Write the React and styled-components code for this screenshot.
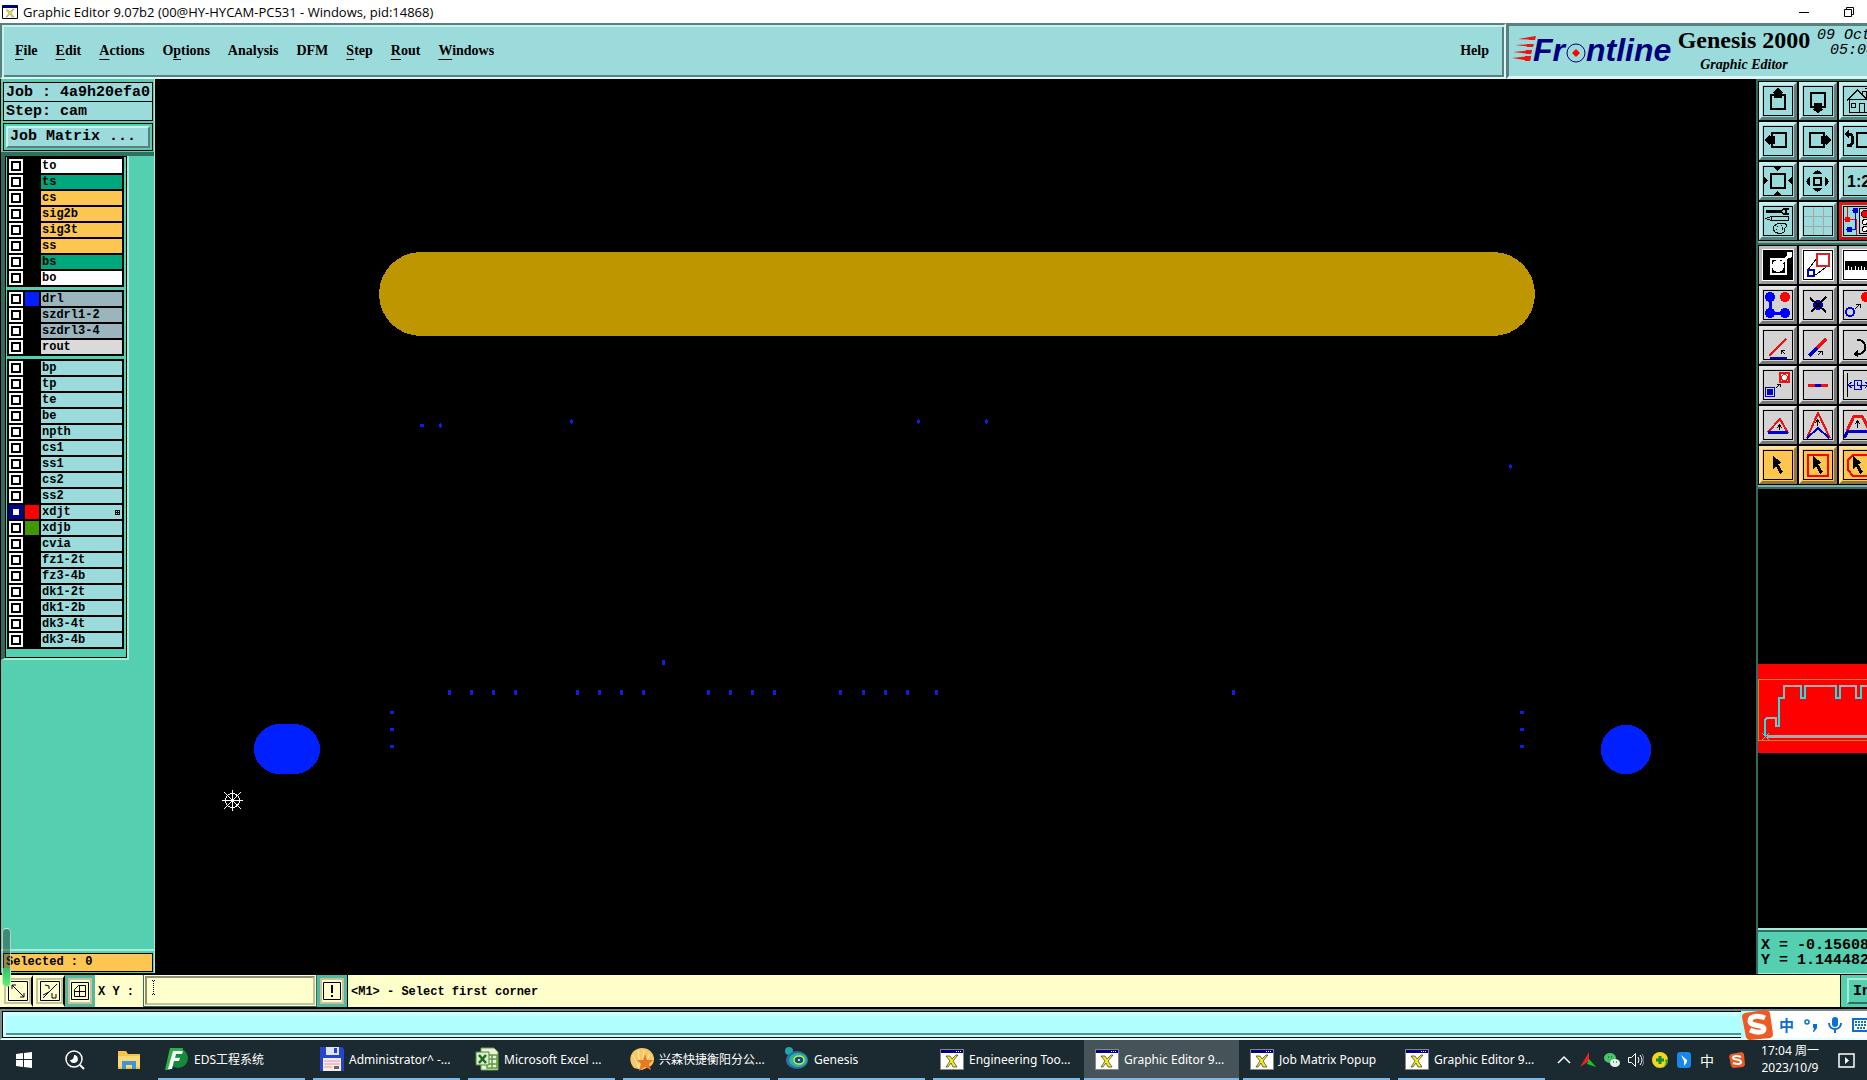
import React from 'react'
import styled, { createGlobalStyle } from 'styled-components'

const layerGroups = [
  [
    { name: 'to', bg: '#ffffff' },
    { name: 'ts', bg: '#00a67c' },
    { name: 'cs', bg: '#fdc650' },
    { name: 'sig2b', bg: '#fdc650' },
    { name: 'sig3t', bg: '#fdc650' },
    { name: 'ss', bg: '#fdc650' },
    { name: 'bs', bg: '#00a67c' },
    { name: 'bo', bg: '#ffffff' },
  ],
  [
    { name: 'drl', bg: '#9bb5be', swatch: '#0020ff' },
    { name: 'szdrl1-2', bg: '#9bb5be' },
    { name: 'szdrl3-4', bg: '#9bb5be' },
    { name: 'rout', bg: '#dadada' },
  ],
  [
    { name: 'bp' },
    { name: 'tp' },
    { name: 'te' },
    { name: 'be' },
    { name: 'npth' },
    { name: 'cs1' },
    { name: 'ss1' },
    { name: 'cs2' },
    { name: 'ss2' },
    { name: 'xdjt', swatch: '#ff0000', work: true },
    { name: 'xdjb', swatch: '#409800' },
    { name: 'cvia' },
    { name: 'fz1-2t' },
    { name: 'fz3-4b' },
    { name: 'dk1-2t' },
    { name: 'dk1-2b' },
    { name: 'dk3-4t' },
    { name: 'dk3-4b' },
  ],
]

// menu label and the index of its underlined letter
const menus = [
  ['File', 0],
  ['Edit', 0],
  ['Actions', 0],
  ['Options', 1],
  ['Analysis', -1],
  ['DFM', -1],
  ['Step', 0],
  ['Rout', 0],
  ['Windows', 0],
]

const tallPads = [449, 471, 493, 515, 577, 599, 621, 643, 708, 730, 752, 774, 840, 863, 885, 907, 936, 1233]
const widePads = [[391, 712], [391, 729], [391, 746], [1521, 712], [1521, 729], [1521, 746], [421, 425]]
const roundPads = [[440, 425], [571, 421], [918, 421], [986, 421], [1510, 466]]

const arrowCursor = <path d="M10 6l9 7-4 1 5 8-3 2-4-8-3 3z" fill="#000" />

const viewTools = [
  ['Pan up', <><path d="M8 9h14v14H8z" fill="none" stroke="#000" strokeWidth="2" /><path d="M15 2l6 5h-2v5h-8V7H9z" /></>],
  ['Pan down', <><path d="M8 7h14v14H8z" fill="none" stroke="#000" strokeWidth="2" /><path d="M15 27l6-4h-2v-6h-8v6H9z" /></>],
  ['Home', <g fill="none" stroke="#000"><path d="M4 14.500L14.500 4 25 14.500M6 13v13h18V13M6 13.500h18" /><path d="M8.500 17.500h4v4h-4zM16.500 26v-9h5v9M19 8V5h4v7M22 3l3-1M24 5l4-3" /></g>],
  ['Pan left', <><path d="M9 7h14v14H9z" fill="none" stroke="#000" strokeWidth="2" /><path d="M2 14l5-6v2h5v8H7v2z" /></>],
  ['Pan right', <><path d="M7 7h14v14H7z" fill="none" stroke="#000" strokeWidth="2" /><path d="M28 14l-5-6v2h-5v8h5v2z" /></>],
  ['Previous view', <><path d="M14 7h14v14H14z" fill="none" stroke="#000" strokeWidth="2" /><path d="M5 8h3q4 6 0 11H4" fill="none" stroke="#000" strokeWidth="3" /><path d="M1 8l5-5v9z" /></>],
  ['Zoom in', <><path d="M8 8h14v14H8z" fill="none" stroke="#000" strokeWidth="2" /><path d="M10 1h9l-4.500 4zM10 29h9l-4.500-4zM1 10v9l4-4.500zM29 10v9l-4-4.500z" /></>],
  ['Zoom out', <><path d="M11 12h7v7h-7z" fill="none" stroke="#000" strokeWidth="2" /><path d="M9 8h11l-5.500-4zM9 22h11l-5.500 4zM7 10v11l-4-5.500zM22 10v11l4-5.500z" /></>],
  ['Scale', <text x="4" y="21" fontFamily="Liberation Sans, sans-serif" fontWeight="700" fontSize="16">1:2</text>],
  ['Options', <><path d="M3 4h16v3H3z" /><path d="M26 3h-5l-3 2.500L21 8h5M26 3l-3 1v3l3 1" fill="none" stroke="#000" strokeWidth="1.500" /><path d="M3 12.500l5-2h17v4H8zM8 11v3" fill="none" stroke="#000" /><path d="M11 20l5-3h6l2 3-3 3v3l-4 2-5-2-2-3zM14 20h1M18 19h1M13 23h1M19 21v3" fill="none" stroke="#000" /></>],
  ['Grid', <path d="M10.500 1v28M20.500 1v28M1 10.500h28M1 20.500h28" stroke="#aaa6a8" />],
  ['Panel setup', <><path d="M4.500 1v12h9v16" fill="none" stroke="#f00" /><path d="M12.500 5v18h-6" fill="none" stroke="#00d" /><circle cx="4.500" cy="13.500" r="3" fill="#f00" /><circle cx="12.500" cy="4.500" r="3" fill="#00d" /><circle cx="6.500" cy="23.500" r="3" fill="#00d" /><path d="M16.500 2.500h13v25h-13z" fill="#d8d8d8" stroke="#000" /><circle cx="22" cy="8" r="3.500" fill="#f00" stroke="#000" /><circle cx="22" cy="16" r="2.500" fill="#fff" stroke="#000" /><circle cx="22" cy="23" r="2.500" fill="#fff" stroke="#000" /></>, 'red'],
]

const editTools = [
  ['Add feature', <><path d="M0 0h30v30H0z" /><path d="M7.500 8.500h15v15h-15z" fill="none" stroke="#fff" strokeWidth="2" /><circle cx="15" cy="16" r="6" fill="#fff" /><path d="M19 10l5-4V2h5v5l-5 2-4 4z" fill="#fff" /></>, 'white'],
  ['Copy feature', <><path d="M17 4L5 20M26 15L11 26" stroke="#000" /><path d="M14 4h12v12H14z" fill="#fff" stroke="#d22" strokeWidth="2" /><path d="M5 20h6v6H5z" fill="#fff" stroke="#00c" strokeWidth="2" /></>, 'white'],
  ['Measure', <path d="M2 11h28v9H28v-3h-1v3h-2v-4h-1v4h-2v-3h-1v3h-2v-4h-1v4h-2v-3h-1v3h-2v-4h-1v4H9v-3H8v3H6v-4H5v4H2z" />, 'white'],
  ['Connections', <><path d="M7 8v15h15" fill="none" stroke="#00f" strokeWidth="3" /><g fill="#00f"><circle cx="7" cy="7" r="5" /><circle cx="7" cy="23" r="5" /><circle cx="22" cy="23" r="5" /></g><circle cx="22" cy="7" r="5" fill="#f00" /></>],
  ['Delete', <><circle cx="15" cy="15" r="5" fill="#00c" /><path d="M7 8l16 14M23 7L8 22" stroke="#000" strokeWidth="2" /></>],
  ['Move', <><circle cx="7" cy="22" r="4" fill="none" stroke="#00f" strokeWidth="2" /><circle cx="23" cy="7" r="5" fill="#f00" /><path d="M12 19l5-5M13 14h4v4" fill="none" stroke="#000" /></>],
  ['Rotate line', <><path d="M6 26L23 9" stroke="#e11" strokeWidth="2" /><path d="M7 28h17" stroke="#00c" strokeWidth="3" /><path d="M22 24l-4-4M18 24v-4h4" fill="none" stroke="#000" /></>],
  ['Stretch line', <><path d="M6 26l8-8" stroke="#00c" strokeWidth="3" /><path d="M14 18l9-9" stroke="#e11" strokeWidth="3" /><path d="M15 25l4-4M15 21h4v4" fill="none" stroke="#000" /></>],
  ['Rotate', <><path d="M14 10h3c7 3 7 12 0 14h-4" fill="none" stroke="#000" strokeWidth="2" /><path d="M10 24l5-4v7z" /></>],
  ['Resize', <><path d="M17 3h9v9h-9z" fill="#fff" stroke="#e11" strokeWidth="2" /><circle cx="21.500" cy="7.500" r="3" fill="none" stroke="#e11" /><path d="M2.500 17.500h9v9h-9z" fill="#d3d3d3" stroke="#00c" /><circle cx="7" cy="22" r="3.500" fill="#00c" /><path d="M13 18l3-3M14 14h3v3" stroke="#000" fill="none" /></>],
  ['Merge line', <><path d="M5 15h20" stroke="#e11" strokeWidth="3" /><path d="M12 15h6" stroke="#00c" strokeWidth="3" /></>],
  ['Spacing', <><path d="M4.500 3v24" stroke="#000" /><path d="M11.500 10.500h7v9h-7zM6 15h5M9 12l-4 3 4 3M19 15h6M22 12l4 3-4 3M14 12v3h3v3" fill="none" stroke="#00c" /></>],
  ['Arc', <><path d="M5 22L17 9l8 14" fill="none" stroke="#e11" strokeWidth="2" /><path d="M5 22h20" stroke="#00c" strokeWidth="3" /><path d="M16.500 20v-4M14 18l2.500-3 2.500 3" fill="none" stroke="#000" /></>],
  ['Peak', <><path d="M4 28L15 3l12 25" fill="none" stroke="#e11" strokeWidth="2" /><path d="M4 28l11-10 11 10" fill="none" stroke="#00c" strokeWidth="2" /><path d="M14.500 16v-5M12 13l2.500-3 2.500 3" fill="none" stroke="#000" /></>],
  ['Trapezoid', <><path d="M4 21L11 6h8l8 15" fill="none" stroke="#e11" strokeWidth="3" /><path d="M1 28l4-7h24" fill="none" stroke="#00c" strokeWidth="3" /><path d="M14.500 18v-6M12 14l2.500-3 2.500 3" fill="none" stroke="#000" /></>],
  ['Select', arrowCursor, 'gold'],
  ['Select in box', <><path d="M5 5h20v21H5z" fill="none" stroke="#f00" strokeWidth="2" />{arrowCursor}</>, 'gold'],
  ['Select in polygon', <><path d="M10 5h20v21H10l-5-6V10z" fill="none" stroke="#f00" strokeWidth="2" />{arrowCursor}</>, 'gold'],
]

const XIcon = () => (
  <svg width="24" height="24" viewBox="0 0 24 24" aria-hidden="true">
    <path d="M.5 2.500h23v20H.5z" fill="#fff" stroke="#888" />
    <path d="M1 3h22v3H1z" fill="#000080" />
    <path d="M16 4.500h1M18 4.500h1M20 4.500h1" stroke="#fff" />
    <path d="M6 9h4l2 3 4-4h2l-5 6 4 6h-4l-2-4-3 4H6l4-6z" fill="#f4ef1c" stroke="#333" strokeWidth=".7" />
  </svg>
)

const tasks = [
  { text: 'EDS工程系统', icon: <svg width="24" height="24" viewBox="0 0 24 24"><circle cx="13" cy="11" r="10" fill="#168a3c" /><path d="M5 1h13l-1 5h-7l-1 4h6l-1 4H8l-3 9H0z" fill="#2ab34a" /><path d="M8 4h10l-1 3h-6l-1 4h5l-1 3H9l-2 8H3z" fill="#fff" /></svg> },
  { text: 'Administrator^ -...', icon: <svg width="24" height="24" viewBox="0 0 24 24"><path d="M0 0h22l2 2v22H0z" fill="#2545d0" /><path d="M6 0h13v8H6z" fill="#dfe4f2" /><path d="M14 1h3v5h-3z" fill="#2545d0" /><path d="M3 11h18v13H3z" fill="#f8ebea" /><path d="M4 14h16M4 17h16M4 20h8" stroke="#e69a96" /><path d="M14 19h5v3h-5z" fill="#666" /></svg> },
  { text: 'Microsoft Excel ...', icon: <svg width="24" height="24" viewBox="0 0 24 24"><path d="M6 1h13l4 4v18H6z" fill="#e8f2df" stroke="#6ca044" /><path d="M12 8h10v13H12zM12 12h10M12 17h10M17 8v13" fill="none" stroke="#5d9b3c" strokeWidth="1.500" /><path d="M1 5h13v13H1z" fill="#d8edc8" stroke="#4b8b32" /><path d="M4 8l7 8M11 8l-7 8" stroke="#1e6b24" strokeWidth="2.500" /></svg> },
  { text: '兴森快捷衡阳分公...', icon: <svg width="24" height="24" viewBox="0 0 24 24"><path d="M4 21C-4 12 2 1 12 1s16 11 9 18l-9 4z" fill="#f7c765" /><path d="M9 21L3 8M10 20L8 3M12 20l2-17M13 20l7-13" stroke="#fff0b4" /><path d="M15 7l2 6 6 0-4 4 2 6-6-3-6 4 2-7-4-4h6z" fill="#e87922" /></svg> },
  { text: 'Genesis', icon: <svg width="24" height="24" viewBox="0 0 24 24"><circle cx="4" cy="4" r="4" fill="#21a7a5" /><ellipse cx="12" cy="13" rx="11" ry="9" fill="#2f6ca8" /><ellipse cx="13" cy="13" rx="9" ry="7" fill="#27b69d" /><ellipse cx="14" cy="13" rx="5" ry="4" fill="#154c89" stroke="#c8ea38" strokeWidth="1.500" /><circle cx="14" cy="13" r="1" fill="#fff" /></svg> },
  { text: 'Engineering Too...', icon: <XIcon /> },
  { text: 'Graphic Editor 9...', icon: <XIcon />, active: true },
  { text: 'Job Matrix Popup', icon: <XIcon /> },
  { text: 'Graphic Editor 9...', icon: <XIcon /> },
]

const ToolIcon = ({ children }) => (
  <svg width="30" height="30" viewBox="0 0 30 30" shapeRendering="crispEdges" aria-hidden="true">
    {children}
    <path d="M.5.5h29v29H.5z" fill="none" stroke="#000" />
  </svg>
)

const App = () => {
  return (
    <Screen>
      <GlobalStyle />

      <TitleBar>
        <svg width="16" height="16" viewBox="0 0 16 16" aria-hidden="true">
          <path d="M.5 1.500h15v13H.5z" fill="#fff" stroke="#000" />
          <path d="M1 1h14v3H1z" fill="#000080" />
          <path d="M4 6h2l2 2 3-3h1L9 9l3 4h-2l-2-3-3 3H4l3-4z" fill="#eee82a" stroke="#777" strokeWidth=".5" />
        </svg>
        <h1>Graphic Editor 9.07b2 (00@HY-HYCAM-PC531 - Windows, pid:14868)</h1>
        <WindowButton aria-label="Minimize">
          <svg width="12" height="12" viewBox="0 0 12 12"><path d="M1 6.500h10" stroke="#000" /></svg>
        </WindowButton>
        <WindowButton aria-label="Restore">
          <svg width="12" height="12" viewBox="0 0 12 12"><path d="M1.500 3.500h7v7h-7zM3.500 3.500v-2h7v7h-2" fill="none" stroke="#000" /></svg>
        </WindowButton>
      </TitleBar>

      <Header>
        <MenuBar>
          {menus.map(([label, key]) => (
            <MenuItem key={label}>
              {key < 0 ? label : <>{label.slice(0, key)}<u>{label[key]}</u>{label.slice(key + 1)}</>}
            </MenuItem>
          ))}
          <HelpItem>Help</HelpItem>
        </MenuBar>
        <Brand>
          <svg width="163" height="36" viewBox="0 0 163 36" aria-label="Frontline">
            <g fill="#ee1515">
              <path d="M7 7l18-3-1 4zM4 13l19-1-1 3zM2 20l19-2-1 4zM1 26l19-2-1 5z" />
              <path d="M18 5h6l-1 3h-5zM16 12h6l-1 3h-5zM15 18h6l-1 4h-5zM14 24h6l-1 5h-5z" />
            </g>
            <g fontFamily="Liberation Sans, sans-serif" fontWeight="700" fontStyle="italic" fontSize="32" fill="#00007e">
              <text x="22" y="29">Fr</text>
              <text x="75" y="29">ntline</text>
            </g>
            <circle cx="65" cy="21" r="9" fill="#9bdbdb" stroke="#00007e" />
            <path d="M65 17l4 4-4 4-4-4z" fill="#f00" />
          </svg>
          <BrandName>
            <strong>Genesis 2000</strong>
            <em>Graphic Editor</em>
          </BrandName>
          <Clock>
            <span>09 Oct</span>
            <span>05:04</span>
          </Clock>
        </Brand>
      </Header>

      <Body>
        <Sidebar>
          <JobInfo>
            <p>Job : 4a9h20efa0</p>
            <p>Step: cam</p>
          </JobInfo>
          <MatrixFrame>
            <MatrixButton>Job Matrix ...</MatrixButton>
          </MatrixFrame>
          <LayerArea>
            <LayerFrame>
              {layerGroups.map((group, i) => (
                <LayerGroup key={i}>
                  {group.map((layer) => (
                    <LayerRow key={layer.name}>
                      <LayerCheck type="checkbox" id={layer.name} $work={layer.work} />
                      <Swatch $color={layer.swatch} />
                      <LayerName htmlFor={layer.name} $bg={layer.bg}>
                        {layer.name}
                        {layer.work && (
                          <svg width="5" height="5" viewBox="0 0 5 5" shapeRendering="crispEdges"><path d="M.5.5h4v4h-4zM2.500 0v5M0 2.500h5" fill="none" stroke="#000" /></svg>
                        )}
                      </LayerName>
                    </LayerRow>
                  ))}
                </LayerGroup>
              ))}
            </LayerFrame>
          </LayerArea>
          <Selected>Selected : 0</Selected>
        </Sidebar>

        <Canvas viewBox="155 79 1601 896" shapeRendering="crispEdges" aria-label="Board view">
          <rect x="379" y="252" width="1156" height="84" rx="42" fill="#be9700" />
          <g fill="#0020ff">
            <rect x="254" y="724" width="66" height="50" rx="26" ry="25" />
            <rect x="1601" y="725" width="50" height="49" rx="24" />
          </g>
          <g fill="#0a22e0">
            {tallPads.map((x) => <rect key={x} x={x - 1} y="690" width="3" height="5" />)}
            <rect x="662" y="660" width="3" height="5" />
            {widePads.map(([x, y]) => <rect key={x + '-' + y} x={x - 1} y={y - 1} width="4" height="3" />)}
            {roundPads.map(([x, y]) => <path key={x} d={`M${x - 1} ${y - 1}h3v3h-3zM${x} ${y - 2}h1v5h-1z`} />)}
          </g>
          <g fill="none" stroke="#fff">
            <circle cx="232.500" cy="800.500" r="7" />
            <path d="M222 800.500h21M232.500 790v21M224 792l17 17M241 792l-17 17" />
          </g>
        </Canvas>

        <RightPanel>
          <ToolGrid>
            {viewTools.map(([label, icon, tone]) => (
              <ToolButton key={label} aria-label={label} $tone={tone || 'cyan'}><ToolIcon>{icon}</ToolIcon></ToolButton>
            ))}
          </ToolGrid>
          <ToolGrid>
            {editTools.map(([label, icon, tone]) => (
              <ToolButton key={label} aria-label={label} $tone={tone || 'gray'}><ToolIcon>{icon}</ToolIcon></ToolButton>
            ))}
          </ToolGrid>
          <Overview>
            <svg width="110" height="89" viewBox="0 0 110 89" shapeRendering="crispEdges" aria-label="Board overview">
              <path d="M0 0h110v89H0z" fill="#f00" />
              <path d="M.5 15.500H120v61H.5z" fill="none" stroke="#d88a10" />
              <path d="M9 72h110" stroke="#aaa" strokeWidth="3" />
              <path d="M7 72V56l2-2h9v8h3V34h5V22h17v12h4V22h31v12h4V22h16v12h5V22h10" fill="none" stroke="#20e0e8" strokeWidth="2" />
              <path d="M9 54h9v8M26 34V22h17M47 22h31M82 22h16v12M103 22h10" fill="none" stroke="#9fb5b5" strokeWidth="2" />
              <path d="M4 69l7 7M11 69l-7 7" stroke="#20e0e8" />
            </svg>
          </Overview>
          <Coords>
            <p>X = -0.15608</p>
            <p>Y = 1.144482</p>
          </Coords>
        </RightPanel>
      </Body>

      <CommandRow>
        <SnapButton aria-label="Snap to corner">
          <svg width="20" height="20" viewBox="0 0 20 20"><path d="M.5.500h19v19H.5zM4 4l12 12M4 8V4h4M12 16h4v-4" fill="none" stroke="#000" /></svg>
        </SnapButton>
        <SnapButton aria-label="Snap to angle">
          <svg width="20" height="20" viewBox="0 0 20 20"><path d="M.5.500h19v19H.5zM3 17L17 3M5 4l4 1v3M3 14l6-3M12 12v5h4M16 13v4" fill="none" stroke="#000" /></svg>
        </SnapButton>
        <SnapButton $framed aria-label="Snap to grid">
          <svg width="18" height="18" viewBox="0 0 18 18"><path d="M.5.500h17v17H.5zM3.500 14.500v-7l4-4h7v11zM8.500 3v12M3 9.500h12" fill="none" stroke="#000" /></svg>
        </SnapButton>
        <label htmlFor="xy">X Y :</label>
        <XYField>
          <input id="xy" type="text" />
          <svg width="3" height="15" viewBox="0 0 3 15" shapeRendering="crispEdges"><path d="M0 .5h3M0 14.500h3M1.500 1v13" stroke="#000" strokeDasharray="1 1" /></svg>
        </XYField>
        <SnapButton $framed aria-label="Alert">
          <svg width="18" height="18" viewBox="0 0 18 18"><path d="M.5.500h17v17H.5z" fill="none" stroke="#000" /><path d="M9 3v8M9 13v2" stroke="#000" strokeWidth="2" /></svg>
        </SnapButton>
        <Message>&lt;M1&gt; - Select first corner</Message>
        <UnitCell><button>Inch</button></UnitCell>
        <ScrollPill />
      </CommandRow>

      <StatusStrip>
        <div />
        <ImeBar>
          <svg width="32" height="30" viewBox="0 0 32 30" aria-label="Sogou">
            <path d="M4 3L24 0q4 0 5 3l3 21q0 3-3 4l-20 2q-3 0-4-3L1 7q0-3 3-4z" fill="#ee5a24" />
            <path d="M24 8c-7-3-15-2-15 3 0 6 14 3 14 8 0 4-8 4-14 1" fill="none" stroke="#fff" strokeWidth="5" />
          </svg>
          <span>中</span>
          <svg width="14" height="14" viewBox="0 0 14 14"><circle cx="3" cy="4" r="2" fill="none" stroke="#0a6fd0" strokeWidth="1.500" /><path d="M9 6h4v4l-3 4H9l1-4H9z" fill="#0a6fd0" /></svg>
          <svg width="14" height="16" viewBox="0 0 14 16"><rect x="4" y="0" width="6" height="10" rx="3" fill="#0a6fd0" /><path d="M1 6c0 8 12 8 12 0M7 12v4" fill="none" stroke="#0a6fd0" strokeWidth="2" /></svg>
          <svg width="18" height="14" viewBox="0 0 18 14"><path d="M1 1h16v12H1z" fill="none" stroke="#0a6fd0" strokeWidth="2" /><path d="M3 4h12M3 7h12M5 10h8" stroke="#0a6fd0" strokeWidth="2" strokeDasharray="2 1" /></svg>
        </ImeBar>
      </StatusStrip>

      <Taskbar>
        <Launchers>
          <button aria-label="Start">
            <svg width="16" height="16" viewBox="0 0 16 16"><path d="M0 2l7-1v6H0zM8 1l8-1v7H8zM0 8h7v7l-7-1zM8 8h8v8l-8-1z" fill="#fff" /></svg>
          </button>
          <button aria-label="Search">
            <svg width="20" height="20" viewBox="0 0 20 20"><circle cx="9" cy="9" r="8" fill="none" stroke="#fff" strokeWidth="1.500" /><path d="M15 15l4 4" stroke="#fff" strokeWidth="2" /><path d="M9 5a4 4 0 1 1-4 5q4 0 4-5z" fill="#fff" /></svg>
          </button>
          <button aria-label="File Explorer">
            <svg width="22" height="18" viewBox="0 0 22 18"><path d="M0 0h8l2 3h12v15H0z" fill="#f6c342" /><path d="M0 5h22v11H0z" fill="#fbd978" /><path d="M4 18v-8h14v8h-4v-4H8v4z" fill="#3b96dd" /></svg>
          </button>
        </Launchers>
        {tasks.map((task, i) => (
          <Task key={i} $active={task.active}>
            {task.icon}
            <span>{task.text}</span>
          </Task>
        ))}
        <Tray>
          <svg viewBox="0 0 16 16"><path d="M2 11l6-6 6 6" fill="none" stroke="#fff" strokeWidth="1.500" /></svg>
          <svg viewBox="0 0 16 16"><path d="M9 0v9l-9 6z" fill="#f02020" /><path d="M9 7l7 8-9-3z" fill="#12c818" /></svg>
          <svg viewBox="0 0 16 16"><ellipse cx="6" cy="6" rx="6" ry="5" fill="#45c46a" /><ellipse cx="11" cy="11" rx="5" ry="4" fill="#e4f1e8" /><path d="M4 5h1M7 5h1M9 10h1M12 10h1" stroke="#1b2a30" /></svg>
          <svg viewBox="0 0 16 16"><path d="M.5 5.500h3l4-4v13l-4-4h-3z" fill="none" stroke="#fff" /><path d="M10 5q2 3 0 6M12 3q4 5 0 10" fill="none" stroke="#fff" /><path d="M14 2q4 6 0 12" fill="none" stroke="#889" /></svg>
          <svg viewBox="0 0 16 16"><circle cx="8" cy="8" r="8" fill="#f7d41e" /><path d="M2 13A8 8 0 0 0 16 7l-3 1a6 6 0 0 1-11 5z" fill="#2ba536" /><path d="M8 4v8M4 8h8" stroke="#168a35" strokeWidth="3" /></svg>
          <svg viewBox="0 0 16 16"><rect x="1" width="14" height="16" rx="3" fill="#1787ee" /><path d="M5 3l6 5v2l-3 4V9z" fill="#fff" /></svg>
          <b>中</b>
          <svg viewBox="0 0 16 16"><path d="M2 2l11-2 2 2 1 11-2 2-10 1-2-2L0 4z" fill="#ee5a24" /><path d="M12 5C8 3 4 4 4 6s8 1 8 4-5 2-8 1" fill="none" stroke="#fff" strokeWidth="2" /></svg>
        </Tray>
        <TaskClock>
          <span>17:04 周一</span>
          <span>2023/10/9</span>
        </TaskClock>
        <Notify aria-label="Notifications">
          <svg width="17" height="15" viewBox="0 0 17 15"><path d="M1 1h15v13H1z" fill="none" stroke="#fff" strokeWidth="1.500" /><path d="M7 4l4 3.500L7 11z" fill="#fff" /></svg>
        </Notify>
      </Taskbar>
    </Screen>
  )
}

export default App

const serif = "'Liberation Serif', serif"
const mono = "'Liberation Mono', monospace"
const ui = "'Noto Sans', 'Noto Sans CJK SC', sans-serif"

const tones = {
  cyan: ['#9bdbdb', '#c8f0ee', '#57807f'],
  red: ['#9bdbdb', '#e01818', '#b80f0f'],
  gray: ['#d3d3d3', '#e6e6e6', '#777777'],
  white: ['#ffffff', '#bcbcbc', '#999999'],
  gold: ['#fdc650', '#ffe2a2', '#94753a'],
}

const GlobalStyle = createGlobalStyle`
    *, *::before, *::after{
        box-sizing: border-box;
    }
    body{
        margin: 0;
        background-color: black;
        overflow: hidden;
    }
    h1, p{
        margin: 0;
    }
    button{
        border: none;
        padding: 0;
        color: inherit;
        font: inherit;
        background-color: transparent;
    }
    svg{
        display: block;
        flex-shrink: 0;
    }
`

const Screen = styled.div`
    height: 100vh;
    width: 100%;
    display: flex;
    flex-direction: column;
    overflow: hidden;
    color: black;
`

const TitleBar = styled.div`
    height: 23px;
    flex-shrink: 0;
    display: flex;
    align-items: center;
    padding: 0 12px 0 2px;
    background-color: white;
    h1{
        flex: 1;
        margin-left: 5px;
        font-family: 'Open Sans', sans-serif;
        font-weight: 400;
        font-size: 13px;
        line-height: 20px;
    }
`

const WindowButton = styled.button`
    width: 12px;
    height: 12px;
    margin-left: 33px;
`

const Header = styled.div`
    height: 56px;
    flex-shrink: 0;
    display: flex;
    background-color: #9bdbdb;
`

const MenuBar = styled.nav`
    flex: 1;
    display: flex;
    align-items: center;
    gap: 18px;
    padding: 0 15px 0 13px;
    border: 2px solid #57807f;
    border-bottom-color: #dff5f5;
    border-right-color: #dff5f5;
    box-shadow: inset 2px 2px #c8f0ee, inset -2px -2px #57807f;
`

const MenuItem = styled.button`
    font-family: ${serif};
    font-weight: 700;
    font-size: 14px;
    line-height: 20px;
    u{
        text-underline-offset: 4px;
        text-decoration-thickness: 1px;
        text-decoration-skip-ink: none;
    }
`

const HelpItem = styled(MenuItem)`
    margin-left: auto;
`

const Brand = styled.div`
    width: 361px;
    display: flex;
    padding-left: 2px;
    overflow: hidden;
    border-left: 3px solid #57807f;
    border-top: 3px solid #57807f;
    border-bottom: 3px solid #dff5f5;
    > svg{
        margin-top: 6px;
    }
`

const BrandName = styled.div`
    width: 140px;
    flex-shrink: 0;
    display: flex;
    flex-direction: column;
    align-items: center;
    font-family: ${serif};
    strong{
        font-size: 24px;
        line-height: 28px;
    }
    em{
        font-size: 14px;
        font-weight: 700;
        line-height: 22px;
    }
`

const Clock = styled.div`
    display: flex;
    flex-direction: column;
    flex-shrink: 0;
    padding: 2px 0 0 3px;
    font-family: ${mono};
    font-style: italic;
    font-size: 15px;
    line-height: 15px;
    span + span{
        padding-left: 13px;
    }
`

const Body = styled.div`
    flex: 1;
    min-height: 0;
    display: flex;
    background-color: black;
`

const Sidebar = styled.aside`
    width: 154px;
    margin: 0 0 2px 1px;
    flex-shrink: 0;
    display: flex;
    flex-direction: column;
    padding: 3px 1px 1px 2px;
    background-color: #54cfb0;
    border-right: 1px solid #a8ebd9;
`

const JobInfo = styled.div`
    border: 1px solid black;
    background-color: #9bdbdb;
    font-family: ${mono};
    font-weight: 700;
    font-size: 15px;
    p{
        padding: 1px 0 0 2px;
        line-height: 17px;
        white-space: nowrap;
    }
    p + p{
        border-top: 1px solid black;
    }
`

const MatrixFrame = styled.div`
    margin: 2px 0 1px;
    padding: 2px;
    border: 1px solid black;
`

const MatrixButton = styled.button`
    width: 100%;
    height: 22px;
    padding-left: 2px;
    text-align: left;
    background-color: #9bdbdb;
    border: 2px solid #57807f;
    border-top-color: #c8f0ee;
    border-left-color: #c8f0ee;
    font-family: ${mono};
    font-weight: 700;
    font-size: 15px;
    line-height: 18px;
`

const LayerArea = styled.div`
    flex: 1;
    min-height: 0;
    margin: 0 -1px 0 -2px;
    border-top: 4px solid #2f6f60;
    border-bottom: 2px solid #a8ebd9;
`

const LayerFrame = styled.div`
    width: 128px;
    display: flex;
    flex-direction: column;
    gap: 3px;
    padding: 1px 3px 9px 1px;
    border-left: 4px solid #34695d;
    border-right: 2px solid #a8ebd9;
    border-bottom: 2px solid #a8ebd9;
    box-shadow: inset -1px -1px black, inset 1px 1px black;
`

const LayerGroup = styled.div`
    display: flex;
    flex-direction: column;
    gap: 2px;
    margin: 0 0 0 1px;
    padding: 2px;
    background-color: black;
`

const LayerRow = styled.div`
    display: flex;
    gap: 2px;
    height: 14px;
`

const LayerCheck = styled.input`
    appearance: none;
    display: grid;
    place-content: center;
    width: 14px;
    height: 14px;
    margin: 0;
    flex-shrink: 0;
    background: ${({ $work }) => ($work ? '#00009a' : 'white')};
    &::before{
        content: '';
        width: 10px;
        height: 10px;
        border: 2px solid ${({ $work }) => ($work ? '#00009a' : 'black')};
        background-color: white;
    }
`

const Swatch = styled.span`
    width: 14px;
    flex-shrink: 0;
    background-color: ${({ $color }) => $color || 'black'};
`

const LayerName = styled.label`
    flex: 1;
    display: flex;
    justify-content: space-between;
    align-items: center;
    padding: 0 2px 0 1px;
    background-color: ${({ $bg }) => $bg || '#9bdbdb'};
    font-family: ${mono};
    font-weight: 700;
    font-size: 12px;
    line-height: 14px;
`

const Selected = styled.div`
    margin-top: 2px;
    padding-left: 2px;
    border: 1px solid black;
    background-color: #fdc650;
    font-family: ${mono};
    font-weight: 700;
    font-size: 12px;
    line-height: 17px;
`

const Canvas = styled.svg`
    flex: 1;
    min-width: 0;
    height: 100%;
`

const RightPanel = styled.aside`
    width: 111px;
    flex-shrink: 0;
    display: flex;
    flex-direction: column;
    overflow: hidden;
    border-left: 2px solid #34695d;
    margin-bottom: 1px;
`

const ToolGrid = styled.div`
    display: grid;
    grid-template-columns: repeat(3, 38px);
    gap: 2px;
    padding: 1px;
    border-top: 2px solid #34695d;
    border-bottom: 2px solid #7fb5a9;
`

const ToolButton = styled.button`
    width: 38px;
    height: 38px;
    display: flex;
    justify-content: center;
    align-items: center;
    background-color: ${({ $tone }) => tones[$tone][0]};
    border: 3px solid ${({ $tone }) => tones[$tone][2]};
    border-top-color: ${({ $tone }) => tones[$tone][1]};
    border-left-color: ${({ $tone }) => tones[$tone][1]};
`

const Overview = styled.div`
    flex: 1;
    display: flex;
    align-items: center;
    border-top: 2px solid #34695d;
`

const Coords = styled.div`
    height: 46px;
    flex-shrink: 0;
    padding: 8px 3px 0;
    background-color: #54cfb0;
    border-top: 2px solid #a8ebd9;
    border-bottom: 1px solid #a8ebd9;
    box-shadow: inset 0 2px #2f6f60;
    font-family: ${mono};
    font-weight: 700;
    font-size: 15px;
    line-height: 15px;
    white-space: nowrap;
`

const CommandRow = styled.div`
    position: relative;
    height: 34px;
    flex-shrink: 0;
    display: flex;
    align-items: stretch;
    padding-left: 1px;
    border-bottom: 2px solid black;
    background-color: #ffffcc;
    font-family: ${mono};
    font-weight: 700;
    font-size: 12px;
    label{
        width: 48px;
        padding-left: 3px;
        line-height: 34px;
        white-space: nowrap;
    }
`

const SnapButton = styled.button`
    width: ${({ $framed }) => ($framed ? 30 : 32)}px;
    display: flex;
    justify-content: center;
    align-items: center;
    border: 3px solid ${({ $framed }) => ($framed ? '#54b8a0' : '#ffffcc')};
    border-right: ${({ $framed }) => ($framed ? '3px solid #54b8a0' : '2px solid black')};
    box-shadow: inset 0 0 0 2px #c4c49c;
`

const XYField = styled.div`
    position: relative;
    width: 174px;
    padding: 1px;
    border: 1px solid #2f6f60;
    border-top: none;
    input{
        width: 100%;
        height: 100%;
        padding: 0 6px;
        border: 2px solid #8f8f72;
        border-right-color: #c4c49c;
        border-bottom-color: #c4c49c;
        background-color: #ffffcc;
        font: inherit;
    }
    svg{
        position: absolute;
        left: 8px;
        top: 5px;
    }
`

const Message = styled.p`
    flex: 1;
    padding-left: 3px;
    border-left: 1px solid black;
    line-height: 34px;
`

const UnitCell = styled.div`
    width: 27px;
    display: flex;
    overflow: hidden;
    padding: 3px 0 3px 6px;
    border-left: 1px solid black;
    background-color: #54cfb0;
    button{
        flex-shrink: 0;
        width: 60px;
        padding-left: 4px;
        text-align: left;
        border: 2px solid #2f6f60;
        border-top-color: #a8ebd9;
        border-left-color: #a8ebd9;
        font-size: 15px;
    }
`

// floating gauge that sits over the lower left corner
const ScrollPill = styled.div`
    position: absolute;
    left: 2px;
    bottom: 20px;
    width: 9px;
    height: 59px;
    border: 1px solid rgba(255, 255, 255, 0.6);
    border-radius: 5px;
    background: linear-gradient(rgba(40, 70, 60, 0.5) 68%, #35c268 69%, #60ee70);
`

const StatusStrip = styled.div`
    height: 31px;
    flex-shrink: 0;
    display: flex;
    border-top: 2px solid #718c8c;
    border-left: 2px solid #718c8c;
    border-bottom: 2px solid #dfffff;
    > div:first-child{
        flex: 1;
        border: 1px solid black;
        border-right: none;
        background-color: #b0ffff;
        box-shadow: inset 3px 4px #d0ffff, inset 0 -2px #c8ffff, inset 0 -4px #578f8f;
    }
`

const ImeBar = styled.div`
    width: 126px;
    flex-shrink: 0;
    display: flex;
    align-items: center;
    gap: 10px;
    background: linear-gradient(90deg, #b0ffff 20px, white 20px);
    color: #0a6fd0;
    font-family: ${ui};
    font-weight: 700;
    font-size: 15px;
    line-height: 24px;
    span{
        margin-left: -4px;
    }
`

const Taskbar = styled.footer`
    height: 40px;
    flex-shrink: 0;
    display: flex;
    align-items: stretch;
    background-color: #1b2a30;
    color: white;
    font-family: ${ui};
    font-size: 12px;
`

const Launchers = styled.div`
    width: 154px;
    flex-shrink: 0;
    display: flex;
    align-items: center;
    justify-content: space-between;
    padding: 0 14px 0 16px;
`

const Task = styled.button`
    position: relative;
    width: 155px;
    flex-shrink: 0;
    display: flex;
    align-items: center;
    gap: 5px;
    padding: 0 0 2px 11px;
    white-space: nowrap;
    background-color: ${({ $active }) => ($active ? '#46545a' : 'transparent')};
    &::after{
        content: '';
        position: absolute;
        left: ${({ $active }) => ($active ? 0 : 4)}px;
        right: ${({ $active }) => ($active ? 0 : 4)}px;
        bottom: 0;
        height: 2px;
        background-color: #76b9ed;
    }
`

const Tray = styled.div`
    display: flex;
    align-items: center;
    gap: 8px;
    margin-left: auto;
    svg{
        width: 16px;
        height: 16px;
    }
    b{
        width: 16px;
        margin-right: 5px;
        font-weight: 400;
        font-size: 14px;
    }
`

const TaskClock = styled.time`
    width: 90px;
    display: flex;
    flex-direction: column;
    justify-content: center;
    align-items: center;
    padding-bottom: 2px;
    line-height: 17px;
`

const Notify = styled.button`
    width: 32px;
    padding-left: 3px;
`
